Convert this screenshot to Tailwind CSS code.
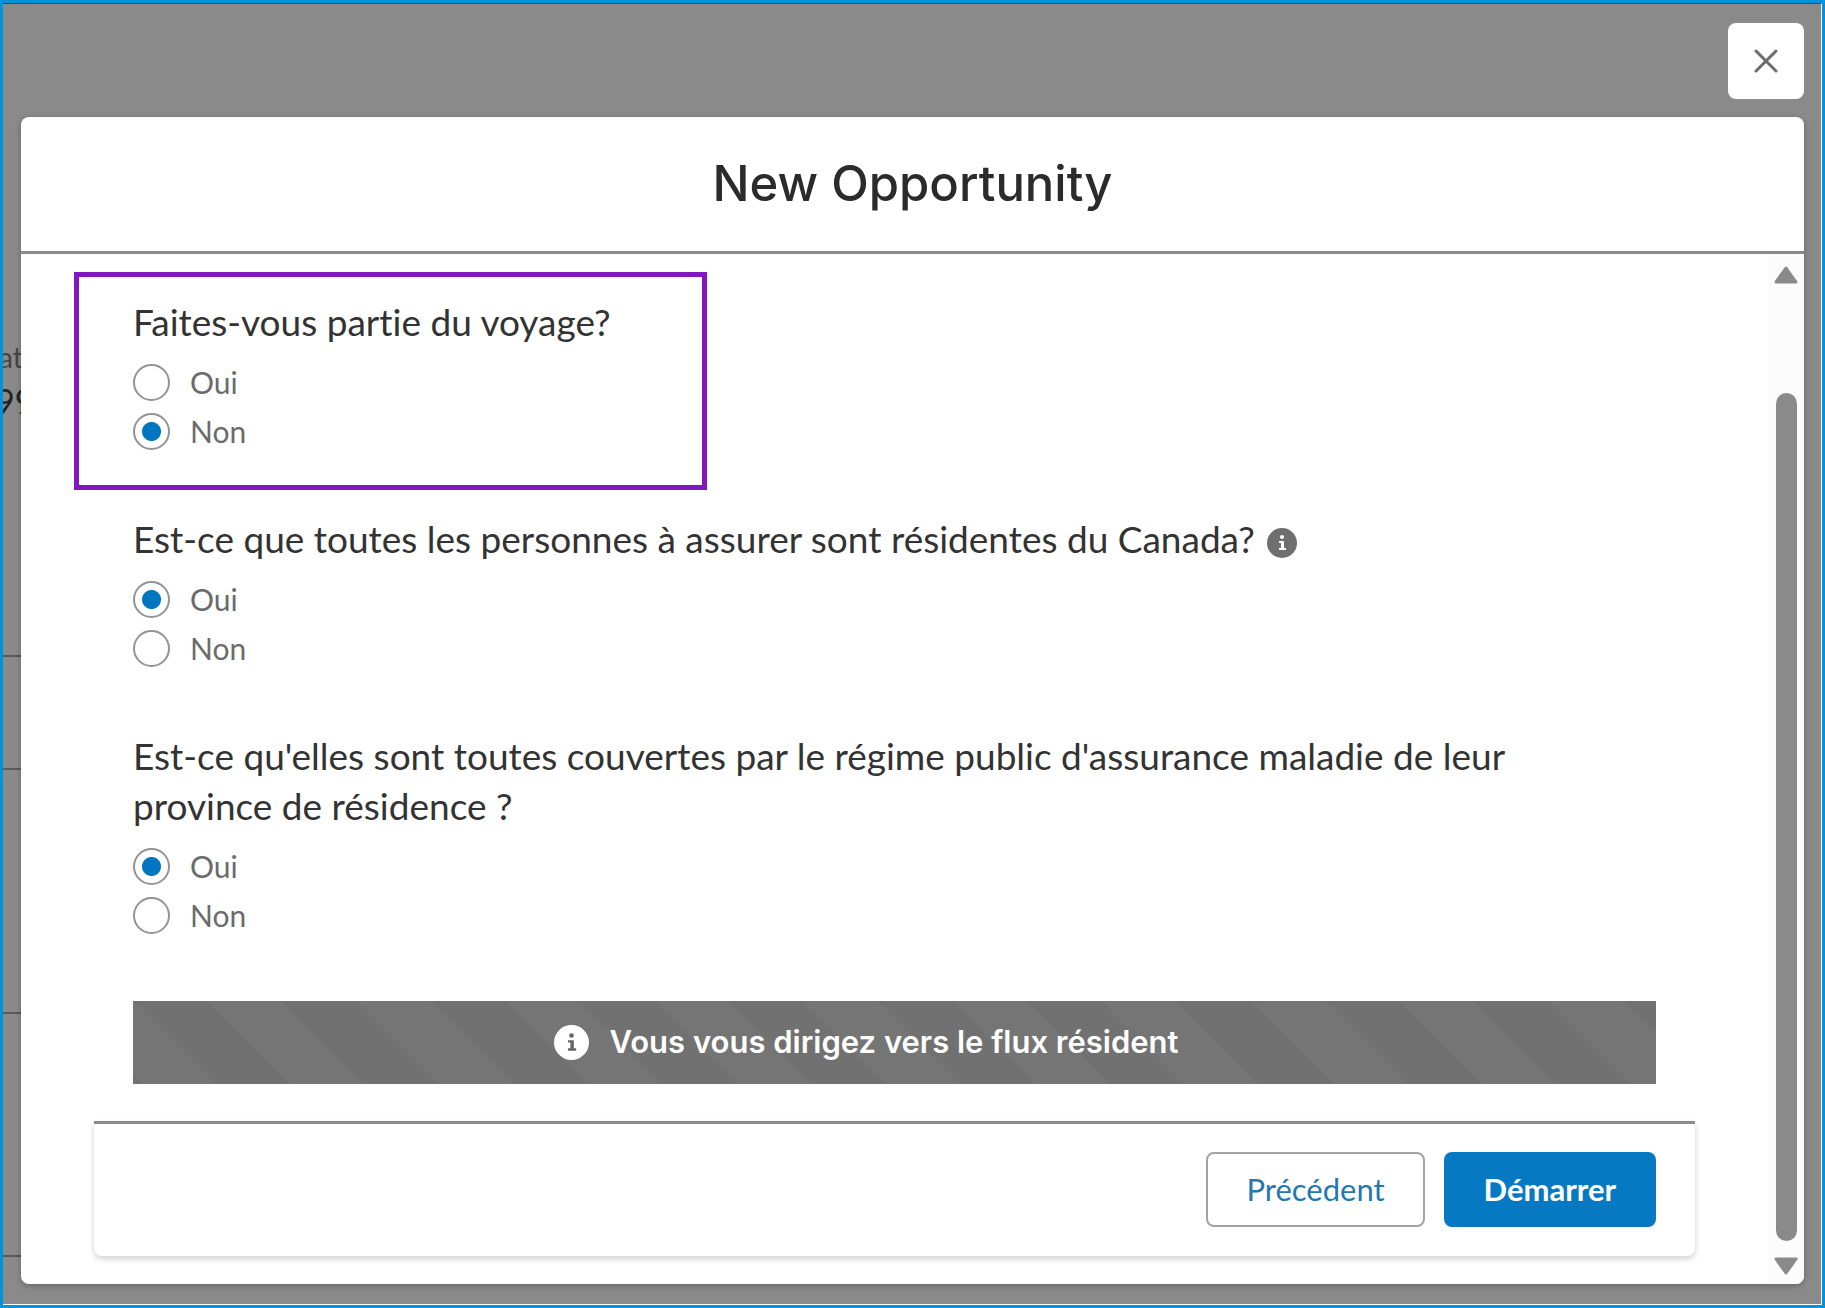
<!DOCTYPE html>
<html lang="fr">
<head>
    <meta charset="UTF-8">
    <meta name="viewport" content="width=device-width, initial-scale=1.0">
    <title>New Opportunity</title>
    <script src="https://cdn.jsdelivr.net/npm/@tailwindcss/browser@4"></script>
</head>
<body class="font-[Lato,sans-serif] text-[#333] [font-variant-ligatures:none]">
  <div class="relative flex flex-col min-h-screen bg-[#8a8a8a] border-3 border-[#0093dd] pl-[18px] pr-[18px] pb-[21px]">

    <!-- Page derrière la fenêtre -->
    <div class="absolute inset-0 overflow-hidden border-t border-t-[#444] border-r border-r-white border-b border-b-white" aria-hidden="true">
      <p class="absolute -left-1 top-[335px] text-[28px] leading-9 text-[#444]">at</p>
      <p class="absolute -left-2 top-[375px] text-[34px] leading-11 text-[#222]">99</p>
      <hr class="absolute left-0 top-[651px] w-5 border-t-2 border-[#5c5c5c]">
      <hr class="absolute left-0 top-[764px] w-5 border-t-2 border-[#5c5c5c]">
      <hr class="absolute left-0 top-[1008px] w-5 border-t-2 border-[#5c5c5c]">
      <hr class="absolute left-0 top-[1251px] w-5 border-t-2 border-[#5c5c5c]">
    </div>

    <!-- Bouton fermer -->
    <div class="relative flex justify-end pt-5 pb-[18px]">
      <button type="button" aria-label="Fermer" class="flex items-center justify-center size-[76px] bg-white rounded-lg">
        <svg class="size-6" viewBox="0 0 24 24" fill="none" stroke="#6b6b6b" stroke-width="3" stroke-linecap="round"><path d="M2 2L22 22M22 2L2 22"/></svg>
      </button>
    </div>

    <!-- Fenêtre -->
    <section role="dialog" aria-labelledby="titre" class="relative flex-1 flex flex-col bg-white rounded-lg shadow-[0_2px_6px_rgba(0,0,0,0.25)]">
      <header class="h-[137px] flex items-center justify-center border-b-3 border-[#8a8a8a]">
        <h1 id="titre" class="font-[Inter,sans-serif] font-medium text-[49px] leading-14 text-[#2b2b2b] [font-optical-sizing:none]">New Opportunity</h1>
      </header>

      <div class="flex-1 flex">
        <form class="flex-1 px-[73px] pt-[43px] pb-6">
          <div class="flex flex-col gap-[58px] px-[39px]">

            <div class="relative">
              <div class="absolute -left-[59px] -top-[25px] w-[633px] h-[218px] border-5 border-[#8217c1] pointer-events-none"></div>
              <fieldset>
                <legend class="text-[37px] leading-[50px] mb-[11px]">Faites-vous partie du voyage?</legend>
                <label class="flex items-center gap-5 h-[49px] text-[30px] text-[#6b6b6b]">
                  <input type="radio" name="voyage" class="appearance-none size-[37px] rounded-full border-2 border-[#949494] checked:bg-[radial-gradient(circle,#0176c0_9px,transparent_10px)]">
                  Oui
                </label>
                <label class="flex items-center gap-5 h-[49px] text-[30px] text-[#6b6b6b]">
                  <input type="radio" name="voyage" checked class="appearance-none size-[37px] rounded-full border-2 border-[#949494] checked:bg-[radial-gradient(circle,#0176c0_9px,transparent_10px)]">
                  Non
                </label>
              </fieldset>
            </div>

            <fieldset>
              <legend class="text-[37px] leading-[50px] mb-[11px]">
                <span class="flex items-center gap-3">
                  Est-ce que toutes les personnes à assurer sont résidentes du Canada?
                  <svg class="size-[30px] mt-2" viewBox="0 0 30 30"><circle cx="15" cy="15" r="15" fill="#6f6f6f"/><circle cx="15" cy="9" r="2" fill="#fff"/><path d="M12 13h5v7h2v2h-7v-2h2v-5h-2z" fill="#fff"/></svg>
                </span>
              </legend>
              <label class="flex items-center gap-5 h-[49px] text-[30px] text-[#6b6b6b]">
                <input type="radio" name="canada" checked class="appearance-none size-[37px] rounded-full border-2 border-[#949494] checked:bg-[radial-gradient(circle,#0176c0_9px,transparent_10px)]">
                Oui
              </label>
              <label class="flex items-center gap-5 h-[49px] text-[30px] text-[#6b6b6b]">
                <input type="radio" name="canada" class="appearance-none size-[37px] rounded-full border-2 border-[#949494] checked:bg-[radial-gradient(circle,#0176c0_9px,transparent_10px)]">
                Non
              </label>
            </fieldset>

            <fieldset>
              <legend class="text-[37px] leading-[50px] mb-[11px] pr-24">Est-ce qu'elles sont toutes couvertes par le régime public d'assurance maladie de leur province de résidence ?</legend>
              <label class="flex items-center gap-5 h-[49px] text-[30px] text-[#6b6b6b]">
                <input type="radio" name="regime" checked class="appearance-none size-[37px] rounded-full border-2 border-[#949494] checked:bg-[radial-gradient(circle,#0176c0_9px,transparent_10px)]">
                Oui
              </label>
              <label class="flex items-center gap-5 h-[49px] text-[30px] text-[#6b6b6b]">
                <input type="radio" name="regime" class="appearance-none size-[37px] rounded-full border-2 border-[#949494] checked:bg-[radial-gradient(circle,#0176c0_9px,transparent_10px)]">
                Non
              </label>
            </fieldset>
          </div>

          <!-- Bandeau d'information -->
          <div class="px-[39px] pt-[61px]">
            <div role="status" class="flex items-center justify-center gap-5 h-[83px] pr-14 text-white bg-[#757575] bg-[linear-gradient(45deg,#717171_25%,transparent_25%,transparent_50%,#717171_50%,#717171_75%,transparent_75%)] bg-[length:149px_149px]">
              <svg class="size-[35px]" viewBox="0 0 30 30"><circle cx="15" cy="15" r="15" fill="#fff"/><circle cx="15" cy="9" r="2" fill="#666"/><path d="M12 13h5v7h2v2h-7v-2h2v-5h-2z" fill="#666"/></svg>
              <span class="font-[Inter,sans-serif] font-semibold text-[31px] [font-optical-sizing:none]">Vous vous dirigez vers le flux résident</span>
            </div>
          </div>

          <footer class="flex justify-end gap-[19px] mt-[37px] pt-7 pb-[29px] px-[39px] border-t-3 border-[#8a8a8a] rounded-b-lg shadow-[0_3px_6px_rgba(0,0,0,0.18)]">
            <button type="button" class="h-[75px] px-[38px] rounded-lg border-2 border-[#a3a3a3] bg-white text-[31px] text-[#2478ad]">Précédent</button>
            <button type="submit" class="h-[75px] px-10 rounded-lg bg-[#0779c2] text-[31px] font-bold text-white">Démarrer</button>
          </footer>
        </form>

        <!-- Barre de défilement -->
        <div class="w-9 flex flex-col items-center pt-3 pb-[9px] bg-[#fcfcfc] rounded-br-lg" aria-hidden="true">
          <svg class="w-6 h-[18px]" viewBox="0 0 24 18"><path d="M12 2L22 16H2Z" fill="#8a8a8a" stroke="#8a8a8a" stroke-width="3" stroke-linejoin="round"/></svg>
          <div class="flex-1 w-[21px] mt-[109px] mb-4 rounded-full bg-[#8a8a8a]"></div>
          <svg class="w-6 h-[18px]" viewBox="0 0 24 18"><path d="M12 16L22 2H2Z" fill="#8a8a8a" stroke="#8a8a8a" stroke-width="3" stroke-linejoin="round"/></svg>
        </div>
      </div>
    </section>
  </div>
</body>
</html>
